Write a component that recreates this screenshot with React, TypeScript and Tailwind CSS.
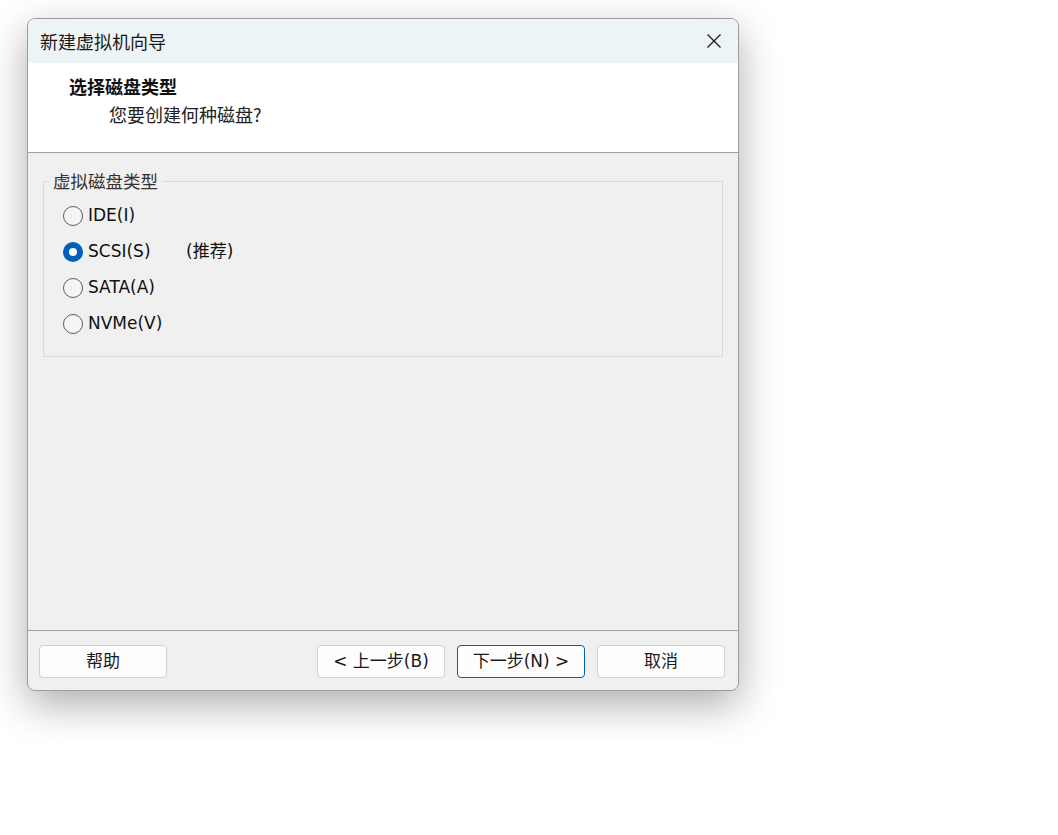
import React from "react";

const cjk = { fontFamily: '"Noto Sans CJK SC", "Noto Sans", sans-serif' };
const mixed = { fontFamily: '"DejaVu Sans", "Noto Sans CJK SC", sans-serif' };

function Radio({ checked }: { checked?: boolean }) {
  if (checked) {
    return (
      <span className="w-[20px] h-[20px] rounded-full bg-[#005fb8] flex items-center justify-center shrink-0">
        <span className="w-[8px] h-[8px] rounded-full bg-white" />
      </span>
    );
  }
  return <span className="w-[20px] h-[20px] rounded-full border border-[#5d5d5d] bg-[#f5f5f5] shrink-0" />;
}

function Btn({ label, primary }: { label: string; primary?: boolean }) {
  return (
    <button
      style={mixed}
      className={`w-[128px] h-[33px] rounded-[4px] bg-[#fdfdfd] text-[17px] text-[#1a1a1a] flex items-center justify-center ${
        primary ? "border border-[#005fb8]" : "border border-[#d0d0d0]"
      }`}
    >
      {label}
    </button>
  );
}

export default function App() {
  const options = [
    { label: "IDE(I)" },
    { label: "SCSI(S)", checked: true, note: "(推荐)" },
    { label: "SATA(A)" },
    { label: "NVMe(V)" },
  ];

  return (
    <div className="w-[1058px] h-[835px] bg-white pl-[27px] pt-[18px]" style={cjk}>
      <div className="w-[712px] h-[673px] border border-[#9c9c9c] rounded-[8px] overflow-hidden flex flex-col shadow-[0_14px_40px_rgba(0,0,0,0.32)] bg-[#f0f0f0]">
        {/* title bar */}
        <div className="h-[44px] bg-[#edf4f6] flex items-center justify-between pl-[12px] pr-[16px]">
          <span className="text-[18px] text-[#1a1a1a]">新建虚拟机向导</span>
          <svg width="16" height="16" viewBox="0 0 16 16" className="text-[#1a1a1a]">
            <path d="M1.5 1.5 L14.5 14.5 M14.5 1.5 L1.5 14.5" stroke="currentColor" strokeWidth="1.3" fill="none" />
          </svg>
        </div>

        {/* header */}
        <div className="h-[90px] bg-white border-b border-[#a0a0a0] pt-[11px]">
          <div className="pl-[41px] text-[18px] font-bold text-[#111] leading-[24px]">选择磁盘类型</div>
          <div className="pl-[81px] mt-[4px] text-[18px] text-[#222] leading-[24px]">您要创建何种磁盘?</div>
        </div>

        {/* body */}
        <div className="flex-1 pt-[17px] pl-[15px]">
          <fieldset className="w-[680px] h-[187px] border border-[#dadada] pt-[6px]">
            <legend className="ml-[5px] px-[4px] text-[17.5px] text-[#333] leading-[22px]">虚拟磁盘类型</legend>
            <div className="flex flex-col pl-[19px]" style={mixed}>
              {options.map((o) => (
                <div key={o.label} className="h-[36px] flex items-center gap-[5px]">
                  <Radio checked={o.checked} />
                  <span className="text-[17px] text-[#111] w-[93px]">{o.label}</span>
                  {o.note && <span className="text-[17px] text-[#111]">{o.note}</span>}
                </div>
              ))}
            </div>
          </fieldset>
        </div>

        {/* footer */}
        <div className="h-[60px] border-t border-[#a0a0a0] flex items-start pt-[14px] pl-[11px] pr-[13px]">
          <Btn label="帮助" />
          <div className="flex-1" />
          <div className="flex gap-[12px]">
            <Btn label="< 上一步(B)" />
            <Btn label="下一步(N) >" primary />
            <Btn label="取消" />
          </div>
        </div>
      </div>
    </div>
  );
}
